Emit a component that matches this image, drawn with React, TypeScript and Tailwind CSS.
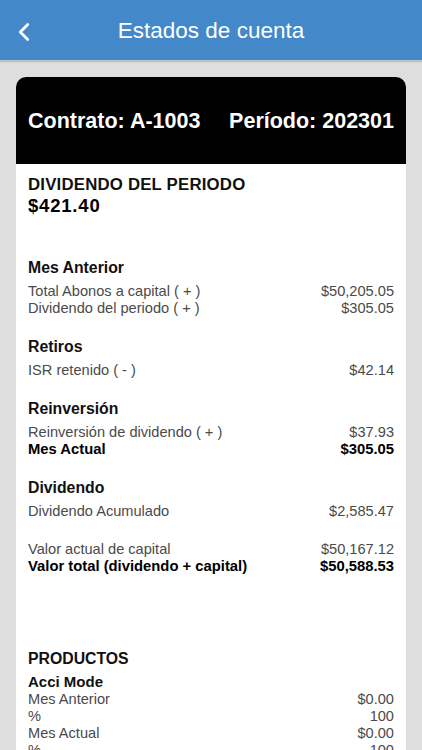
import { ChevronLeft } from "lucide-react";

type Row = { label: string; value: string; bold?: boolean };

function Line({ label, value, bold }: Row) {
  return (
    <div
      className={`flex justify-between leading-[17px] ${bold ? "font-bold text-black text-[14.8px]" : "text-[#4a4a4a] text-[14.6px]"}`}
    >
      <span>{label}</span>
      <span>{value}</span>
    </div>
  );
}

function Section({ title, rows }: { title: string; rows: Row[] }) {
  return (
    <div className="mt-[20px]">
      <div className="text-[15.8px] font-bold text-[#111] leading-[20px] mb-[5px]">{title}</div>
      {rows.map((r, i) => (
        <Line key={i} {...r} />
      ))}
    </div>
  );
}

export default function App() {
  return (
    <div
      className="w-[422px] h-[750px] overflow-hidden bg-[#dedede]"
      style={{ fontFamily: '"Liberation Sans", Arial, sans-serif' }}
    >
      <div className="h-[61px] bg-[#4388c9] relative flex items-center justify-center border-b border-[#b9c3cc] shadow-[0_1px_1px_rgba(0,0,0,0.15)]">
        <ChevronLeft className="absolute left-[9px] top-[17px] text-white" size={30} strokeWidth={2.2} />
        <span className="text-white text-[22.5px] leading-[28px] pt-[1px]">Estados de cuenta</span>
      </div>

      <div className="mx-4 mt-[16px] rounded-t-[10px] bg-white overflow-hidden">
        <div className="h-[87px] bg-black flex items-center justify-between px-3 pt-[1px]">
          <span className="text-white text-[21.5px] font-bold">Contrato: A-1003</span>
          <span className="text-white text-[21.5px] font-bold">Período: 202301</span>
        </div>

        <div className="px-3 pt-[11px] pb-10">
          <div className="text-[16.8px] font-bold text-[#111] leading-[20px] tracking-[0.2px]">DIVIDENDO DEL PERIODO</div>
          <div className="text-[18.5px] font-bold text-black leading-[22px] tracking-[0.8px]">$421.40</div>

          <div className="h-[21px]" />

          <Section
            title="Mes Anterior"
            rows={[
              { label: "Total Abonos a capital ( + )", value: "$50,205.05" },
              { label: "Dividendo del periodo ( + )", value: "$305.05" },
            ]}
          />
          <Section title="Retiros" rows={[{ label: "ISR retenido ( - )", value: "$42.14" }]} />
          <Section
            title="Reinversión"
            rows={[
              { label: "Reinversión de dividendo ( + )", value: "$37.93" },
              { label: "Mes Actual", value: "$305.05", bold: true },
            ]}
          />
          <Section title="Dividendo" rows={[{ label: "Dividendo Acumulado", value: "$2,585.47" }]} />

          <div className="mt-[21px]">
            <Line label="Valor actual de capital" value="$50,167.12" />
            <Line label="Valor total (dividendo + capital)" value="$50,588.53" bold />
          </div>

          <div className="h-[74px]" />

          <div className="text-[15.8px] font-bold text-[#111] leading-[20px] mb-[4px]">PRODUCTOS</div>
          <div className="text-[15px] font-bold text-[#111] leading-[17px] mb-[1px]">Acci Mode</div>
          <Line label="Mes Anterior" value="$0.00" />
          <Line label="%" value="100" />
          <Line label="Mes Actual" value="$0.00" />
          <Line label="%" value="100" />
        </div>
      </div>
    </div>
  );
}
